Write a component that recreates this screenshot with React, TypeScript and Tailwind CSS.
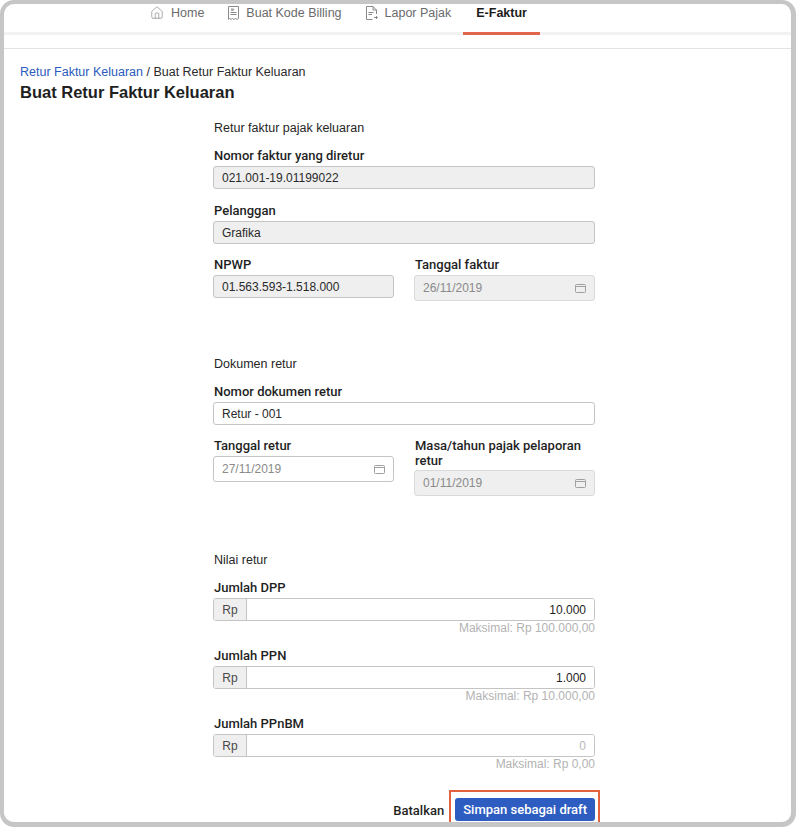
import { House } from 'lucide-react'
import type { ReactNode } from 'react'

function CalendarIcon() {
  return (
    <svg width="11" height="10" viewBox="0 0 11 10" fill="none" stroke="#a0a0a0" strokeWidth="1">
      <rect x="0.5" y="1.5" width="10" height="8" rx="1" />
      <line x1="0.5" y1="3.5" x2="10.5" y2="3.5" />
    </svg>
  )
}

function BillingIcon() {
  return (
    <svg width="11" height="14" viewBox="0 0 11 14" fill="none" stroke="#8a8a8a" strokeWidth="1">
      <path d="M0.5 0.5 H10.5 V12.5 L9 13.5 L7.5 12.5 L6 13.5 L4.5 12.5 L3 13.5 L1.5 12.5 L0.5 13.5 Z" />
      <path d="M3 3 H5 L6 3.6 L5 4.2 H3" />
      <line x1="2.5" y1="6.5" x2="8.5" y2="6.5" />
      <line x1="2.5" y1="8.5" x2="8.5" y2="8.5" />
    </svg>
  )
}

function LaporIcon() {
  return (
    <svg width="12" height="14" viewBox="0 0 12 14" fill="none" stroke="#8a8a8a" strokeWidth="1">
      <path d="M6.5 13.5 H0.5 V0.5 H7 L10.5 4 V8" />
      <path d="M7 0.5 V4 H10.5" />
      <line x1="2.5" y1="6.5" x2="7.5" y2="6.5" />
      <line x1="2.5" y1="8.5" x2="6" y2="8.5" />
      <path d="M8 11.5 H11.5 M10 10 L11.5 11.5 L10 13" />
    </svg>
  )
}

function NavItem({ icon, label, active = false }: { icon?: ReactNode; label: string; active?: boolean }) {
  return (
    <div className={`relative h-full flex items-start ${active ? 'px-[13px]' : 'px-3'}`}>
      <div className="flex items-center h-[18px] gap-[7px]">
        {icon}
        <span className={`text-[12.5px] leading-[18px] ${active ? 'text-[#1c1c1c] font-bold' : 'text-[#6a6a6a]'}`}>
          {label}
        </span>
      </div>
      {active && <div className="absolute left-0 right-0 bottom-[-3px] h-[3px] bg-[#e0654a]" />}
    </div>
  )
}

function Label({ children }: { children: ReactNode }) {
  return (
    <div className="font-['Roboto',sans-serif] font-medium text-[13px] leading-[16px] text-[#1f1f1f] pl-px">
      {children}
    </div>
  )
}

function TextInput({ value, disabled = false }: { value: string; disabled?: boolean }) {
  return (
    <div
      className={`mt-[2px] h-[23px] flex items-center px-[8px] border border-[#c4c4c4] rounded-[3px] text-[12px] text-[#2a2a2a] ${
        disabled ? 'bg-[#efefef]' : 'bg-white'
      }`}
    >
      {value}
    </div>
  )
}

function DateInput({ value, disabled = false }: { value: string; disabled?: boolean }) {
  return (
    <div
      className={`mt-[2px] h-[26px] flex items-center justify-between pl-[8px] pr-[8px] border rounded-[3px] text-[12px] text-[#8a8a8a] ${
        disabled ? 'bg-[#efefef] border-[#dadada]' : 'bg-white border-[#c4c4c4]'
      }`}
    >
      <span>{value}</span>
      <CalendarIcon />
    </div>
  )
}

function MoneyInput({ value, hint, placeholder = false }: { value: string; hint: string; placeholder?: boolean }) {
  return (
    <>
      <div className="mt-[2px] h-[23px] flex border border-[#c4c4c4] rounded-[3px] overflow-hidden text-[12px]">
        <div className="w-[33px] bg-[#efefef] border-r border-[#c4c4c4] flex items-center justify-center text-[#4a4a4a]">
          Rp
        </div>
        <div className={`flex-1 flex items-center justify-end pr-[8px] bg-white ${placeholder ? 'text-[#b9b9b9]' : 'text-[#1f1f1f]'}`}>
          {value}
        </div>
      </div>
      <div className="text-right text-[12px] leading-[14px] text-[#b3b3b3]">{hint}</div>
    </>
  )
}

function SectionTitle({ children }: { children: ReactNode }) {
  return <div className="text-[12.5px] leading-[16px] text-[#262626] pl-px">{children}</div>
}

export default function App() {
  return (
    <div className="w-[797px] h-[827px] bg-white font-['Liberation_Sans',Arial,sans-serif]">
      <div className="w-[796px] h-[827px] border-t-4 border-l-4 border-r-[5px] border-b-[5px] border-[#c6c6c6] rounded-[14px] overflow-hidden">
        {/* Top navigation */}
        <nav className="h-[31px] flex pl-[134px] border-b-[3px] border-[#f2f2f2]">
          <NavItem icon={<House size={14} strokeWidth={1.2} color="#8a8a8a" />} label="Home" />
          <NavItem icon={<BillingIcon />} label="Buat Kode Billing" />
          <NavItem icon={<LaporIcon />} label="Lapor Pajak" />
          <NavItem label="E-Faktur" active />
        </nav>
        <div className="mt-[13px] h-px bg-[#e3e3e3]" />

        <div className="pl-[16px] pt-[15px]">
          <div className="text-[12.5px] leading-[16px] text-[#2a2a2a]">
            <span className="text-[#2c5bbd]">Retur Faktur Keluaran</span> / Buat Retur Faktur Keluaran
          </div>
          <h1 className="mt-px text-[16.5px] leading-[22px] font-bold text-[#1f1f1f]">Buat Retur Faktur Keluaran</h1>
        </div>

        {/* Form */}
        <div className="ml-[209px] w-[382px] mt-[17px]">
          <SectionTitle>Retur faktur pajak keluaran</SectionTitle>
          <div className="mt-[12px]">
            <Label>Nomor faktur yang diretur</Label>
            <TextInput value="021.001-19.01199022" disabled />
          </div>
          <div className="mt-[14px]">
            <Label>Pelanggan</Label>
            <TextInput value="Grafika" disabled />
          </div>
          <div className="mt-[13px] grid grid-cols-2 gap-x-[20px]">
            <div>
              <Label>NPWP</Label>
              <TextInput value="01.563.593-1.518.000" disabled />
            </div>
            <div>
              <Label>Tanggal faktur</Label>
              <DateInput value="26/11/2019" disabled />
            </div>
          </div>

          <div className="mt-[55px]">
            <SectionTitle>Dokumen retur</SectionTitle>
          </div>
          <div className="mt-[12px]">
            <Label>Nomor dokumen retur</Label>
            <TextInput value="Retur - 001" />
          </div>
          <div className="mt-[13px] grid grid-cols-2 gap-x-[20px] items-start">
            <div>
              <Label>Tanggal retur</Label>
              <DateInput value="27/11/2019" />
            </div>
            <div>
              <div className="font-['Roboto',sans-serif] font-medium text-[13px] leading-[15px] text-[#1f1f1f] pl-px">
                Masa/tahun pajak pelaporan
                <br />
                retur
              </div>
              <DateInput value="01/11/2019" disabled />
            </div>
          </div>

          <div className="mt-[56px]">
            <SectionTitle>Nilai retur</SectionTitle>
          </div>
          <div className="mt-[12px]">
            <Label>Jumlah DPP</Label>
            <MoneyInput value="10.000" hint="Maksimal: Rp 100.000,00" />
          </div>
          <div className="mt-[13px]">
            <Label>Jumlah PPN</Label>
            <MoneyInput value="1.000" hint="Maksimal: Rp 10.000,00" />
          </div>
          <div className="mt-[13px]">
            <Label>Jumlah PPnBM</Label>
            <MoneyInput value="0" hint="Maksimal: Rp 0,00" placeholder />
          </div>

          {/* Actions */}
          <div className="mt-[19px] mr-[-5px] flex justify-end items-center">
            <span className="font-['Roboto',sans-serif] font-medium text-[13px] text-[#1f1f1f] pt-[5px]">Batalkan</span>
            <div className="ml-[5px] border-2 border-[#e3613f] pl-[4px] pr-[3px] pt-[5px] pb-[3px]">
              <button className="h-[23px] px-[8px] rounded-[3px] bg-[#2e5dc1] text-white text-[13px] leading-[23px] font-['Roboto',sans-serif] font-medium">
                Simpan sebagai draft
              </button>
            </div>
          </div>
        </div>
      </div>
    </div>
  )
}
